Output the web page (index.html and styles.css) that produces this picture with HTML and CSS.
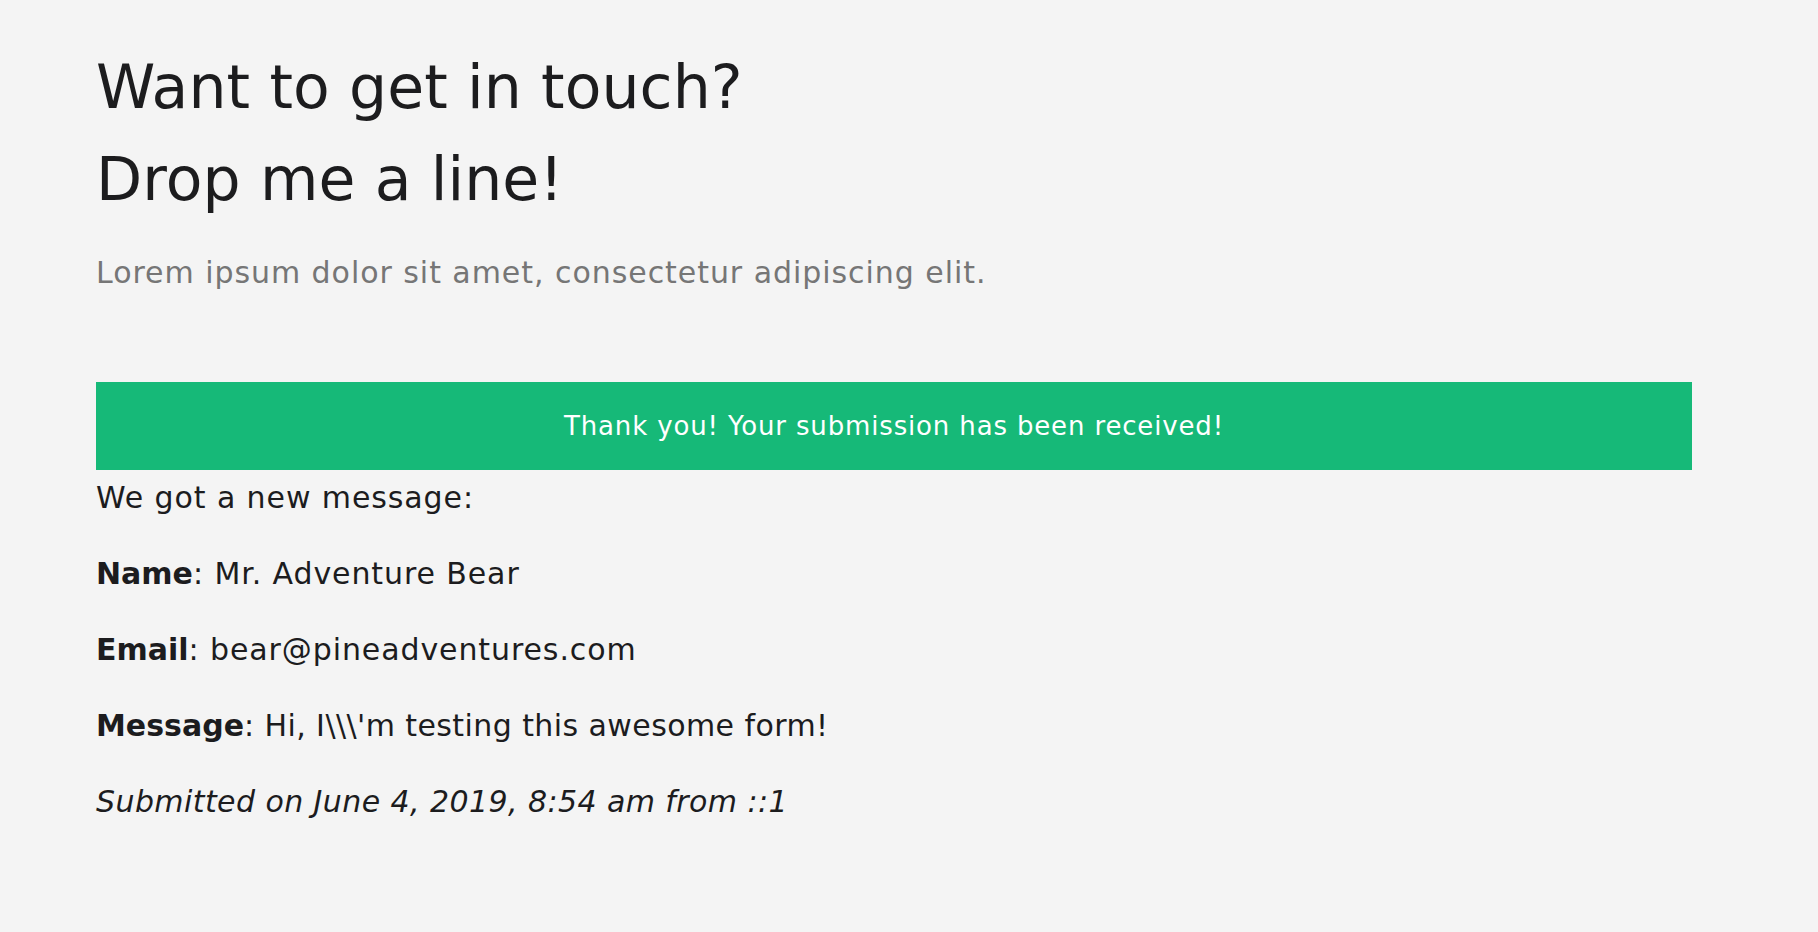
FILE: index.html
```html
<!DOCTYPE html>
<html lang="en">
<head>
<meta charset="utf-8">
<title>Contact</title>
<link rel="stylesheet" href="styles.css">
</head>
<body>
<main class="page">
  <h1 class="title">Want to get in touch?<br>Drop me a line!</h1>
  <p class="lead">Lorem ipsum dolor sit amet, consectetur adipiscing elit.</p>
  <div class="success">Thank you! Your submission has been received!</div>
  <div class="details">
    <p>We got a new message:</p>
    <p><strong>Name</strong>: Mr. Adventure Bear</p>
    <p><strong>Email</strong>: bear@pineadventures.com</p>
    <p class="tight"><strong>Message</strong>: Hi, I\\\'m testing this awesome form!</p>
    <p class="tight"><em>Submitted on June 4, 2019, 8:54 am from ::1</em></p>
  </div>
</main>
</body>
</html>
```
FILE: styles.css
```css
html, body {
  margin: 0;
  padding: 0;
  background: #f4f4f4;
}
body {
  font-family: "DejaVu Sans", "Noto Sans", sans-serif;
  color: #1c1c1e;
}
.page {
  padding: 41px 0 0 96px;
  width: 1596px;
}
.title {
  margin: 0;
  font-size: 60px;
  font-weight: normal;
  line-height: 92px;
  letter-spacing: 0.1px;
  color: #1c1c1e;
}
.lead {
  margin: 25px 0 0;
  font-size: 30px;
  line-height: 45px;
  letter-spacing: 0.95px;
  color: #767676;
}
.success {
  margin-top: 87px;
  background: #16b978;
  color: #ffffff;
  text-align: center;
  font-size: 26px;
  line-height: 40px;
  letter-spacing: 0.85px;
  padding: 24px 0;
}
.details {
  padding-top: 5px;
}
.details p {
  margin: 0 0 30px;
  font-size: 30px;
  line-height: 46px;
  letter-spacing: 0.9px;
}
.details p.tight {
  letter-spacing: 0.42px;
}
.details strong {
  font-weight: bold;
  letter-spacing: 0;
}
.details em {
  font-style: italic;
}
```
